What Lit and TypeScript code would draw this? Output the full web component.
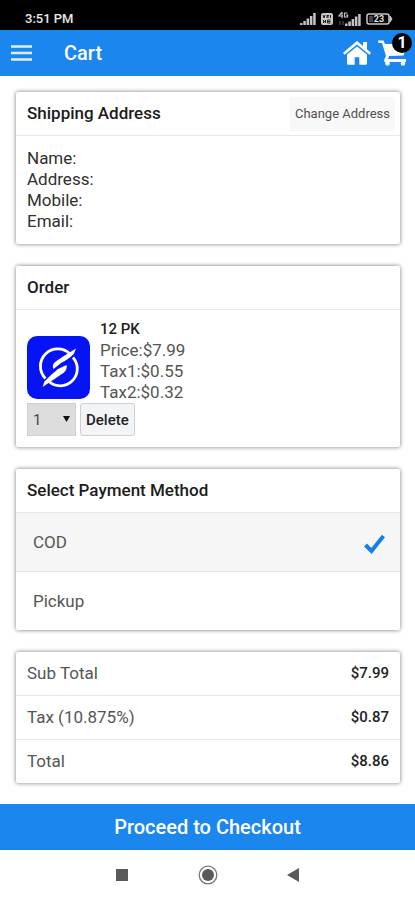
import { LitElement, html, css, svg } from "lit";
import { customElement, property, state } from "lit/decorators.js";

const signalBars = svg`
  <path d="M0 12h2.500v-2H0zM3.300 12h2.500V8H3.300zM6.600 12h2.500V5.500H6.600zM9.900 12h2.500V3H9.900zM13.200 12h2.500V0h-2.500z" fill="#c4c4c4"/>`;

@customElement("phone-status")
export class PhoneStatus extends LitElement {
  static styles = css`
    :host {
      display: flex;
      justify-content: space-between;
      align-items: center;
      height: 30px;
      padding: 8px 22px 0 25px;
      box-sizing: border-box;
      background: #000;
      color: #e8e8e8;
      font: 500 13px/16px Roboto, sans-serif;
    }
    .icons {
      display: flex;
      align-items: center;
      gap: 5px;
    }
    svg {
      display: block;
    }
    .battery-text {
      font: 700 9px Roboto, sans-serif;
      fill: #e0e0e0;
    }
  `;

  render() {
    return html`
      <span>3:51 PM</span>
      <div class="icons">
        <svg width="16" height="12" viewBox="0 0 16 12" aria-hidden="true">${signalBars}</svg>
        <svg width="12" height="12" viewBox="0 0 12 12" aria-hidden="true">
          <rect width="12" height="12" rx="2" fill="#c8c8c8" />
          <path d="M2 2l1 3 1-3M6 2v3M6 2.500h2M6 4h2M9.500 2v3M2.500 7v3M2.500 8.500h2M4.500 7v3M6.500 7v3h3M6.500 7h3M6.500 8.500h3" fill="none" stroke="#222" />
        </svg>
        <svg width="23" height="15" viewBox="0 0 23 15" aria-hidden="true">
          <path d="M4 0L1 4h4M4 0v6M9.500 1H6.500v4h3V3H8" fill="none" stroke="#c4c4c4" stroke-width="1.200" />
          <path d="M2 9v4M5 9v4" stroke="#666" />
          <path d="M7 14h2.500v-2.500H7zM10.300 14h2.500V9.500h-2.500zM13.600 14h2.500V7h-2.500zM16.900 14h2.500V4.500h-2.500zM20.200 14h2.500V2h-2.500z" fill="#c4c4c4" />
        </svg>
        <svg width="27" height="12" viewBox="0 0 27 12" role="img" aria-label="Battery 23 percent">
          <path d="M3 1h18q2 0 2 2v6q0 2-2 2H3Q1 11 1 9V3Q1 1 3 1z" fill="none" stroke="#c8c8c8" stroke-width="1.500" />
          <path d="M24 3l2 3-2 3z" fill="#c8c8c8" stroke="#c8c8c8" />
          <path d="M3 3h4v6H3z" fill="#444" />
          <text class="battery-text" x="13" y="9" text-anchor="middle">23</text>
        </svg>
      </div>
    `;
  }
}

@customElement("cart-header")
export class CartHeader extends LitElement {
  @property({ type: Number }) count = 0;

  static styles = css`
    :host {
      display: flex;
      align-items: center;
      height: 46px;
      padding: 0 8px 0 10px;
      box-sizing: border-box;
      background: #1a86ee;
      color: #fff;
    }
    button,
    a {
      display: block;
      position: relative;
      padding: 0;
      border: 0;
      background: none;
      color: inherit;
    }
    svg {
      display: block;
    }
    h1 {
      flex: 1;
      margin: 0 0 0 31px;
      font: 500 20px/24px Roboto, sans-serif;
    }
    nav {
      display: flex;
      align-items: center;
      gap: 7px;
    }
    .badge {
      position: absolute;
      top: -7px;
      right: -5px;
      width: 20px;
      height: 20px;
      border-radius: 50%;
      background: #000;
      text-align: center;
      font: 700 16px/20px Roboto, sans-serif;
    }
  `;

  render() {
    return html`
      <button type="button" aria-label="Open menu">
        <svg width="23" height="16" viewBox="0 0 23 16">
          <path d="M1 1.500h21M1 8h21M1 14.500h21" stroke="#e0efff" stroke-width="2.500" />
        </svg>
      </button>
      <h1>Cart</h1>
      <nav>
        <a href="#home" aria-label="Home">
          <svg width="28" height="24" viewBox="0 0 28 24" fill="#fff">
            <path d="M14 0L0 11.700l1.600 2L14 3.600l12.400 10.100 1.600-2L24 8.300V1h-4v4z" />
            <path d="M14 5.500L4 13.600V22.500q0 1.200 1.200 1.200h6.500v-7.500h4.600v7.500h6.500q1.200 0 1.200-1.200v-8.900z" />
          </svg>
        </a>
        <a href="#cart" aria-label="Shopping cart">
          <svg width="29" height="26" viewBox="0 0 29 26" fill="#fff">
            <path d="M0 .5h5.500L7 4h22l-3.500 11.500L11 16l-1 3h18v3H6.500L6 20l2-4L4 3H.5z" />
            <circle cx="9.500" cy="23.500" r="2.300" />
            <circle cx="25" cy="23.500" r="2.300" />
          </svg>
          <span class="badge">${this.count}</span>
        </a>
      </nav>
    `;
  }
}

@customElement("app-root")
export class AppRoot extends LitElement {
  @state() private payment = "COD";

  private methods = ["COD", "Pickup"];
  private contact = ["Name:", "Address:", "Mobile:", "Email:"];
  private prices = ["Price:$7.99", "Tax1:$0.55", "Tax2:$0.32"];
  private totals = [
    ["Sub Total", "$7.99"],
    ["Tax (10.875%)", "$0.87"],
    ["Total", "$8.86"],
  ];

  static styles = css`
    :host {
      display: flex;
      flex-direction: column;
      min-height: 100vh;
      background: #fff;
      color: #555;
      font: 400 17px/21px Roboto, sans-serif;
    }
    main {
      flex: 1;
      display: flex;
      flex-direction: column;
      gap: 22px;
      padding: 16px 15px 21px 16px;
    }
    .card {
      border-radius: 2px;
      background: #fff;
      box-shadow: 0 0 4px rgba(0, 0, 0, 0.55);
    }
    .card-head {
      display: flex;
      align-items: center;
      justify-content: space-between;
      height: 43px;
      padding: 0 5px 0 11px;
      border-bottom: 1px solid #e9e9e9;
    }
    h2 {
      margin: 0;
      color: #1c1c1c;
      font: 500 17px/21px Roboto, sans-serif;
    }
    button,
    select {
      box-sizing: border-box;
      font-family: Roboto, sans-serif;
    }
    .change {
      height: 34px;
      padding: 0 5px;
      border: 0;
      background: #f8f8f8;
      color: #505050;
      font-size: 13px;
    }
    .contact {
      padding: 12px 11px;
      color: #303030;
    }
    .contact p,
    .item p {
      margin: 0;
    }
    .order {
      padding: 9px 11px 11px;
    }
    .item {
      display: flex;
      align-items: flex-end;
      gap: 10px;
    }
    .logo {
      display: block;
      margin-bottom: 4px;
    }
    .item .name {
      color: #222;
      font-size: 15px;
      font-weight: 500;
    }
    .actions {
      display: flex;
      gap: 4px;
    }
    .quantity {
      position: relative;
      display: block;
    }
    select {
      width: 49px;
      height: 33px;
      padding: 0 5px;
      border: 1px solid #cfcfcf;
      border-radius: 0;
      background: #ddd;
      color: #444;
      font-size: 15px;
      appearance: none;
    }
    .caret {
      position: absolute;
      top: 13px;
      right: 6px;
      pointer-events: none;
    }
    .delete {
      height: 33px;
      padding: 0 5px;
      border: 1px solid #ccd0d5;
      border-radius: 3px;
      background: #f3f4f6;
      color: #222;
      font-size: 15px;
      font-weight: 500;
    }
    .method {
      position: relative;
      display: flex;
      align-items: center;
      justify-content: space-between;
      height: 58px;
      padding: 0 15px 0 17px;
    }
    .method + .method {
      border-top: 1px solid #e6e6e6;
    }
    .method:has(input:checked) {
      background: #f6f6f6;
    }
    .method input {
      position: absolute;
      opacity: 0;
    }
    .check {
      display: none;
      margin-top: 4px;
    }
    input:checked ~ .check {
      display: block;
    }
    table {
      width: 100%;
      border-collapse: collapse;
    }
    th,
    td {
      height: 43px;
      padding: 0 11px;
    }
    tr + tr > * {
      border-top: 1px solid #e6e6e6;
    }
    th {
      text-align: left;
      font-weight: 400;
    }
    td {
      text-align: right;
      color: #222;
      font-size: 15px;
      font-weight: 500;
    }
    .checkout {
      height: 46px;
      border: 0;
      background: #1a86ee;
      color: #fff;
      font-size: 20px;
      font-weight: 500;
    }
    .system {
      display: flex;
      justify-content: center;
      align-items: center;
      gap: 66px;
      height: 50px;
    }
    .system button {
      display: block;
      padding: 0;
      border: 0;
      background: none;
    }
    .system svg {
      display: block;
    }
  `;

  render() {
    return html`
      <phone-status></phone-status>
      <cart-header .count=${1}></cart-header>
      <main>
        <section class="card">
          <div class="card-head">
            <h2>Shipping Address</h2>
            <button class="change" type="button">Change Address</button>
          </div>
          <div class="contact">${this.contact.map((line) => html`<p>${line}</p>`)}</div>
        </section>

        <section class="card">
          <div class="card-head"><h2>Order</h2></div>
          <div class="order">
            <div class="item">
              <svg class="logo" width="63" height="63" viewBox="0 0 63 63" role="img" aria-label="12 PK">
                <rect width="63" height="63" rx="10" fill="#0613f5" />
                <g fill="none" stroke="#fff" stroke-width="2.800">
                  <path d="M43 18A17 17 0 0 0 18.500 42.500" />
                  <path d="M46 21.500A17 17 0 0 1 22 45.500" />
                </g>
                <path d="M49 12.500L47 17.500Q43 22.500 34 27L26.500 33Q24.500 29.500 28 26L36 20.500z" fill="#fff" />
                <path d="M15.500 51L17.500 45.500L24 39L31 33L39.500 29Q40.500 33 37 36.500L29 42z" fill="#fff" />
              </svg>
              <div>
                <p class="name">12 PK</p>
                ${this.prices.map((line) => html`<p>${line}</p>`)}
              </div>
            </div>
            <div class="actions">
              <label class="quantity">
                <select aria-label="Quantity">
                  <option>1</option>
                  <option>2</option>
                  <option>3</option>
                </select>
                <svg class="caret" width="7" height="6" viewBox="0 0 7 6" aria-hidden="true">
                  <path d="M0 0h7L3.500 6z" fill="#111" />
                </svg>
              </label>
              <button class="delete" type="button">Delete</button>
            </div>
          </div>
        </section>

        <section class="card">
          <div class="card-head"><h2>Select Payment Method</h2></div>
          ${this.methods.map(
            (name) => html`
              <label class="method">
                <input
                  type="radio"
                  name="payment"
                  .checked=${this.payment === name}
                  @change=${() => (this.payment = name)}
                />
                <span>${name}</span>
                <svg class="check" width="22" height="20" viewBox="0 0 22 20" aria-hidden="true">
                  <path d="M2.500 11l6 6L20.500 2" fill="none" stroke="#1380e8" stroke-width="4" />
                </svg>
              </label>
            `
          )}
        </section>

        <section class="card">
          <table>
            <tbody>
              ${this.totals.map(
                ([label, amount]) => html`<tr><th scope="row">${label}</th><td>${amount}</td></tr>`
              )}
            </tbody>
          </table>
        </section>
      </main>
      <button class="checkout" type="button">Proceed to Checkout</button>
      <nav class="system" aria-label="System">
        <button type="button" aria-label="Recent apps">
          <svg width="20" height="20" viewBox="0 0 20 20">
            <rect x="4" y="4" width="12" height="12" fill="#5a5a5a" />
          </svg>
        </button>
        <button type="button" aria-label="Home screen">
          <svg width="20" height="20" viewBox="0 0 20 20">
            <circle cx="10" cy="10" r="8.800" fill="none" stroke="#777" stroke-width="1.300" />
            <circle cx="10" cy="10" r="6" fill="#5a5a5a" />
          </svg>
        </button>
        <button type="button" aria-label="Back">
          <svg width="20" height="20" viewBox="0 0 20 20">
            <path d="M15 3v14L3 10z" fill="#5a5a5a" />
          </svg>
        </button>
      </nav>
    `;
  }
}
